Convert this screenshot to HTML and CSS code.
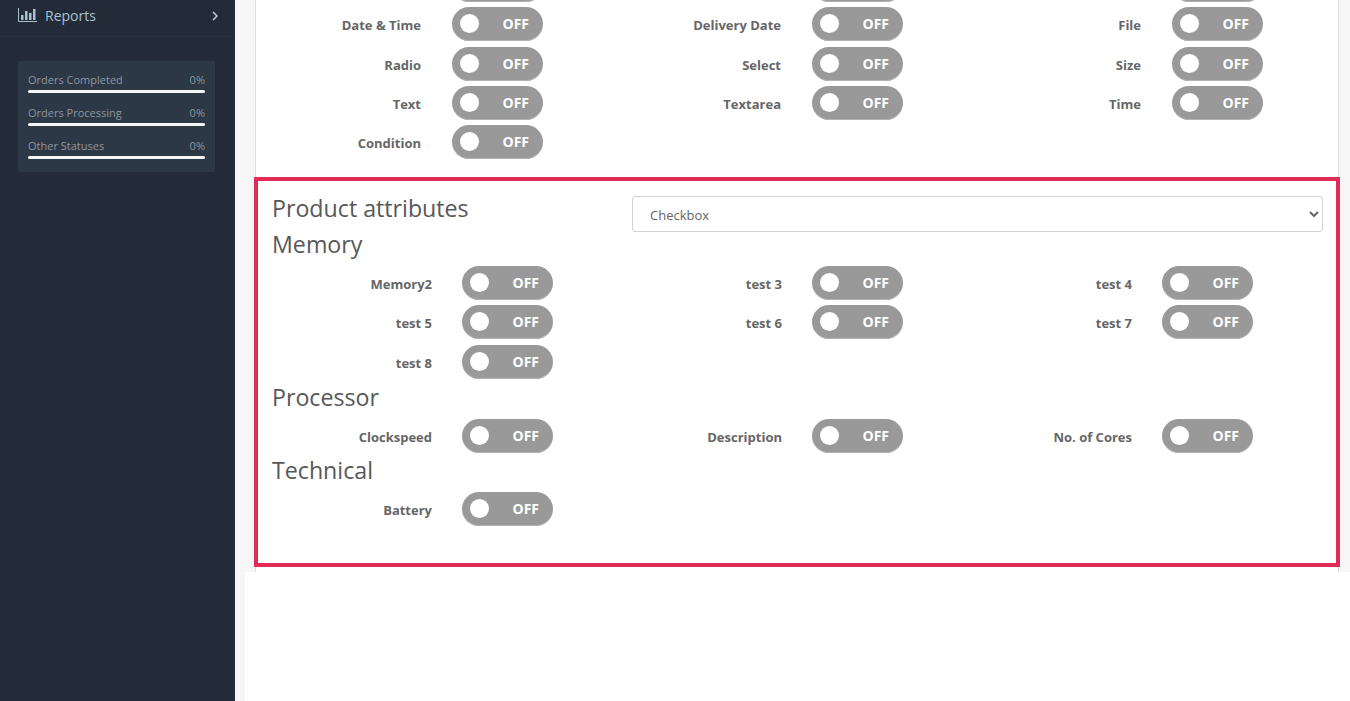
FILE: index.html
```html
<!DOCTYPE html>
<html lang="en">
<head>
<meta charset="utf-8">
<title>Product attributes</title>
<link rel="stylesheet" href="styles.css">
</head>
<body>
<aside class="sidebar">
  <a class="nav-item">
    <svg class="nav-icon" width="19" height="15" viewBox="0 0 19 15" aria-hidden="true">
      <path d="M.5 0v13.500H19" fill="none" stroke="currentColor"/>
      <path d="M3 7h2.500v5H3zM7 3h2.500v9H7zM11 5h2.500v7H11zM15 1h2.500v11H15z" fill="currentColor"/>
    </svg>
    <span class="nav-label">Reports</span>
    <svg class="nav-chevron" width="6" height="10" viewBox="0 0 6 10" aria-hidden="true">
      <path d="M1 1l4 4-4 4" fill="none" stroke="currentColor" stroke-width="1.500"/>
    </svg>
  </a>
  <div class="stats">
    <div class="stat"><div class="stat-head"><span>Orders Completed</span><span>0%</span></div><div class="stat-bar"></div></div>
    <div class="stat"><div class="stat-head"><span>Orders Processing</span><span>0%</span></div><div class="stat-bar"></div></div>
    <div class="stat"><div class="stat-head"><span>Other Statuses</span><span>0%</span></div><div class="stat-bar"></div></div>
  </div>
</aside>
<main class="main">
  <div class="card">
    <div class="grid grid-top">
      <div class="field"><span class="label"></span><span class="toggle"><i class="knob"></i></span></div>
      <div class="field"><span class="label"></span><span class="toggle"><i class="knob"></i></span></div>
      <div class="field"><span class="label"></span><span class="toggle"><i class="knob"></i></span></div>
      <div class="field"><span class="label">Date &amp; Time</span><span class="toggle"><i class="knob"></i><b>OFF</b></span></div>
      <div class="field"><span class="label">Delivery Date</span><span class="toggle"><i class="knob"></i><b>OFF</b></span></div>
      <div class="field"><span class="label">File</span><span class="toggle"><i class="knob"></i><b>OFF</b></span></div>
      <div class="field"><span class="label">Radio</span><span class="toggle"><i class="knob"></i><b>OFF</b></span></div>
      <div class="field"><span class="label">Select</span><span class="toggle"><i class="knob"></i><b>OFF</b></span></div>
      <div class="field"><span class="label">Size</span><span class="toggle"><i class="knob"></i><b>OFF</b></span></div>
      <div class="field"><span class="label">Text</span><span class="toggle"><i class="knob"></i><b>OFF</b></span></div>
      <div class="field"><span class="label">Textarea</span><span class="toggle"><i class="knob"></i><b>OFF</b></span></div>
      <div class="field"><span class="label">Time</span><span class="toggle"><i class="knob"></i><b>OFF</b></span></div>
      <div class="field"><span class="label">Condition</span><span class="toggle"><i class="knob"></i><b>OFF</b></span></div>
    </div>
    <section class="attrs">
      <div class="attrs-head">
        <h3 class="title title-main">Product attributes</h3>
        <select class="type-select"><option>Checkbox</option></select>
      </div>
      <h3 class="title">Memory</h3>
      <div class="grid grid-attrs">
        <div class="field"><span class="label">Memory2</span><span class="toggle"><i class="knob"></i><b>OFF</b></span></div>
        <div class="field"><span class="label">test 3</span><span class="toggle"><i class="knob"></i><b>OFF</b></span></div>
        <div class="field"><span class="label">test 4</span><span class="toggle"><i class="knob"></i><b>OFF</b></span></div>
        <div class="field"><span class="label">test 5</span><span class="toggle"><i class="knob"></i><b>OFF</b></span></div>
        <div class="field"><span class="label">test 6</span><span class="toggle"><i class="knob"></i><b>OFF</b></span></div>
        <div class="field"><span class="label">test 7</span><span class="toggle"><i class="knob"></i><b>OFF</b></span></div>
        <div class="field"><span class="label">test 8</span><span class="toggle"><i class="knob"></i><b>OFF</b></span></div>
      </div>
      <h3 class="title">Processor</h3>
      <div class="grid grid-attrs grid-tight">
        <div class="field"><span class="label">Clockspeed</span><span class="toggle"><i class="knob"></i><b>OFF</b></span></div>
        <div class="field"><span class="label">Description</span><span class="toggle"><i class="knob"></i><b>OFF</b></span></div>
        <div class="field"><span class="label">No. of Cores</span><span class="toggle"><i class="knob"></i><b>OFF</b></span></div>
      </div>
      <h3 class="title">Technical</h3>
      <div class="grid grid-attrs">
        <div class="field"><span class="label">Battery</span><span class="toggle"><i class="knob"></i><b>OFF</b></span></div>
      </div>
    </section>
  </div>
  <div class="page-foot"></div>
</main>
</body>
</html>
```
FILE: styles.css
```css
* { box-sizing: border-box; }
html, body { margin: 0; height: 701px; overflow: hidden; }
body {
  display: flex;
  font-family: "Open Sans", sans-serif;
  background: #fff;
}
.sidebar {
  width: 235px;
  flex: none;
  background: #222b37;
  color: #a9c0cf;
}
.nav-item {
  display: flex;
  align-items: center;
  height: 37px;
  padding: 0 17px 5px 18px;
  border-bottom: 1px solid #27313d;
}
.nav-icon { flex: none; }
.nav-label { margin-left: 8px; font-size: 14px; flex: 1; }
.nav-chevron { flex: none; color: #c6d2da; }
.stats {
  margin: 24px 20px 0 18px;
  height: 111px;
  padding: 10px 10px 0;
  background: #2c3846;
  border-radius: 2px;
}
.stat { height: 33px; }
.stat-head {
  display: flex;
  justify-content: space-between;
  font-size: 11px;
  line-height: 17px;
  color: #8f969d;
}
.stat-bar { height: 3px; margin-top: 2px; background: #f5f6f7; border-radius: 2px; }
.main {
  flex: 1;
  min-width: 0;
  display: flex;
  flex-direction: column;
  height: 701px;
  overflow: hidden;
  background: #f6f6f6;
}
.card {
  flex: none;
  margin: -32px 11px 0 20px;
  height: 604px;
  background: #fff;
  border-left: 1px solid #ddd;
  border-right: 1px solid #ddd;
}
.grid { display: grid; grid-auto-rows: 34px; row-gap: 5.300px; }
.grid-top {
  grid-template-columns: repeat(3, 360px);
  height: 209px;
}
.field {
  display: grid;
  align-items: center;
  grid-template-columns: 165px 91px;
  column-gap: 31px;
}
.label {
  text-align: right;
  font-size: 13px;
  font-weight: 700;
  color: #666;
  padding-top: 2px;
}
.toggle {
  position: relative;
  display: flex;
  align-items: center;
  justify-content: flex-end;
  height: 34px;
  padding: 0 14px 1px 0;
  border-radius: 17px;
  background: #999;
  box-shadow: inset 0 -1px 0 #b4b4b4;
  color: #fff;
  font-size: 14px;
}
.knob {
  position: absolute;
  left: 8px;
  top: 7px;
  width: 19px;
  height: 19px;
  border-radius: 50%;
  background: #fff;
}
.attrs {
  margin: 0 -2px 0 -2px;
  height: 390px;
  padding: 12px 13px 0 14px;
  border: 4px solid #e12d55;
}
.attrs-head { display: flex; justify-content: space-between; height: 37px; }
.title {
  margin: 0 0 7px;
  font-size: 23.200px;
  font-weight: 400;
  line-height: 29px;
  color: #585858;
}
.title-main { padding-top: 1px; }
.type-select {
  width: 691px;
  height: 36px;
  margin-top: 3px;
  padding: 1px 13px 0;
  border: 1px solid #d3d3d3;
  border-radius: 3px;
  background: #fff;
  font: 13px "Open Sans", sans-serif;
  color: #666;
}
.grid-attrs { grid-template-columns: repeat(3, 350px); margin-bottom: 4px; }
.grid-tight { margin-bottom: 3px; }
.grid-attrs .field { grid-template-columns: 160px 91px; column-gap: 30px; }
.page-foot { flex: 1; margin-left: 10px; background: #fff; }
```
